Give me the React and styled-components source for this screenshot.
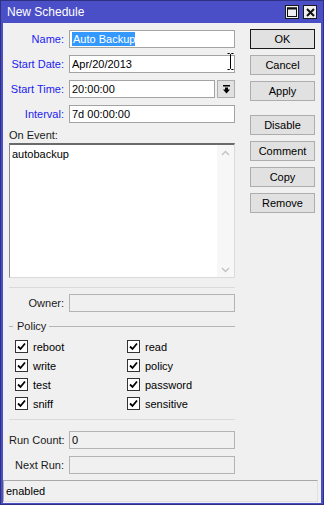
import React from 'react'
import styled, { createGlobalStyle } from 'styled-components'

const GlobalStyle = createGlobalStyle`
  html, body { margin: 0; padding: 0; background: #fff; }
  body { font-family: "Liberation Sans", Arial, sans-serif; font-size: 11px; }
  * { box-sizing: border-box; }
`;

const Window = styled.div`
  width: 324px;
  height: 505px;
  background: #4b4fc7;
  border: 1px solid #2e3082;
  padding: 0 2px 1px 2px;
  display: flex;
  flex-direction: column;
`;

const TitleBar = styled.div`
  height: 22px;
  display: flex;
  align-items: center;
  padding: 0 4px 0 4px;
  color: #fff;
  font-size: 12px;
`;

const Title = styled.span`
  flex: 1;
`;

const TitleButton = styled.div`
  width: 14px;
  height: 14px;
  margin-left: 4px;
  background: #f0f0f0;
  border: 1px solid #1a1a1a;
  display: flex;
  align-items: center;
  justify-content: center;
`;

const Body = styled.div`
  flex: 1;
  background: #f0f0f0;
  display: flex;
  flex-direction: column;
`;

const Main = styled.div`
  flex: 1;
  display: flex;
  padding: 6px 6px 0 6px;
`;

const FormCol = styled.div`
  width: 226px;
  padding-top: 1px;
  display: flex;
  flex-direction: column;
`;

const Row = styled.div`
  display: flex;
  align-items: center;
  height: 18px;
  margin-bottom: ${p => p.$mb ?? 7}px;
  position: relative;
`;

const Label = styled.label`
  width: 56px;
  text-align: right;
  padding-right: 1px;
  margin-right: 4px;
  color: ${p => (p.$blue ? '#1c1cf0' : '#1a1a1a')};
  white-space: nowrap;
`;

const Field = styled.div`
  flex: 1;
  height: 18px;
  border: 1px solid ${p => (p.$disabled ? '#b4b4b4' : '#a3a3a3')};
  background: ${p => (p.$disabled ? '#f0f0f0' : '#fff')};
  color: #000;
  display: flex;
  align-items: center;
  padding-left: 2px;
  white-space: nowrap;
  overflow: hidden;
`;

const Selected = styled.span`
  background: #3399ff;
  color: #fff;
  padding: 1px 0 1px 1px;
`;

const DropButton = styled.div`
  width: 18px;
  height: 18px;
  margin-left: 2px;
  background: #e1e1e1;
  border: 1px solid #adadad;
  display: flex;
  align-items: center;
  justify-content: center;
`;

const Cursor = styled.svg`
  position: absolute;
  right: 1px;
  top: -2px;
`;

const PlainLabel = styled.div`
  color: #1a1a1a;
  margin: 0 0 2px 0;
  line-height: 12px;
`;

const TextArea = styled.div`
  height: 135px;
  background: #fff;
  border-top: 2px solid #6a6a6a;
  border-left: 1px solid #8a8a8a;
  border-right: 1px solid #dadada;
  border-bottom: 1px solid #dadada;
  display: flex;
`;

const TextContent = styled.div`
  flex: 1;
  padding: 3px 2px;
  color: #000;
`;

const ScrollBar = styled.div`
  width: 17px;
  background: #f7f7f7;
  display: flex;
  flex-direction: column;
  justify-content: space-between;
  align-items: center;
  padding: 5px 0 4px 0;
`;

const Separator = styled.div`
  height: 1px;
  background: #d9d9d9;
  margin: ${p => p.$m};
`;

const GroupTitle = styled.div`
  display: flex;
  align-items: center;
  height: 14px;
  margin: 7px 0 4px 0;
  color: #1a1a1a;
  &::before {
    content: '';
    width: 4px;
    height: 1px;
    background: #b5b5b5;
    margin-right: 4px;
  }
  &::after {
    content: '';
    flex: 1;
    height: 1px;
    background: #b5b5b5;
    margin-left: 3px;
  }
`;

const CheckGrid = styled.div`
  display: grid;
  grid-template-columns: 112px 1fr;
  grid-auto-rows: 19px;
  padding-left: 6px;
`;

const CheckItem = styled.div`
  display: flex;
  align-items: center;
  color: #000;
`;

const Box = styled.div`
  width: 13px;
  height: 13px;
  background: #fff;
  border: 1px solid #333;
  margin-right: 5px;
  display: flex;
  align-items: center;
  justify-content: center;
`;

const ButtonCol = styled.div`
  width: 65px;
  margin-left: 15px;
  display: flex;
  flex-direction: column;
`;

const Button = styled.div`
  height: 20px;
  margin-bottom: ${p => p.$mb ?? 6}px;
  background: #e1e1e1;
  border: 1px solid ${p => (p.$default ? '#1a1a1a' : '#adadad')};
  color: #000;
  display: flex;
  align-items: center;
  justify-content: center;
`;

const StatusBar = styled.div`
  height: 22px;
  margin: 0 3px 1px 0;
  border: 1px solid #a8a8a8;
  border-right-color: #e0e0e0;
  border-bottom-color: #e0e0e0;
  display: flex;
  align-items: center;
  padding-left: 2px;
  color: #000;
`;

const Check = () => (
  <svg width="9" height="9" viewBox="0 0 9 9">
    <path d="M1 4.5 L3.5 7 L8 1.5" fill="none" stroke="#000" strokeWidth="1.8" />
  </svg>
);

const Chevron = ({ up }) => (
  <svg width="9" height="6" viewBox="0 0 9 6">
    <path d={up ? 'M1 5 L4.5 1.5 L8 5' : 'M1 1 L4.5 4.5 L8 1'} fill="none" stroke="#c2c2c2" strokeWidth="1.4" />
  </svg>
);

const policies = [
  ['reboot', 'read'],
  ['write', 'policy'],
  ['test', 'password'],
  ['sniff', 'sensitive'],
];

export default function App() {
  return (
    <>
      <GlobalStyle />
      <Window>
        <TitleBar>
          <Title>New Schedule</Title>
          <TitleButton>
            <svg width="10" height="10" viewBox="0 0 10 10">
              <rect x="0.5" y="1" width="9" height="8.5" fill="none" stroke="#111" strokeWidth="1" />
              <rect x="0" y="0.5" width="10" height="2" fill="#111" />
            </svg>
          </TitleButton>
          <TitleButton>
            <svg width="9" height="9" viewBox="0 0 9 9">
              <path d="M1 1 L8 8 M8 1 L1 8" stroke="#111" strokeWidth="2" />
            </svg>
          </TitleButton>
        </TitleBar>
        <Body>
          <Main>
            <FormCol>
              <Row>
                <Label $blue>Name:</Label>
                <Field><Selected>Auto Backup</Selected></Field>
              </Row>
              <Row>
                <Label $blue>Start Date:</Label>
                <Field>Apr/20/2013</Field>
                <Cursor width="7" height="17" viewBox="0 0 7 17">
                  <path d="M0.5 0.5 H2.5 L3.5 1.5 L4.5 0.5 H6.5 M3.5 1.5 V15.5 M0.5 16.5 H2.5 L3.5 15.5 L4.5 16.5 H6.5" fill="none" stroke="#000" strokeWidth="1" />
                </Cursor>
              </Row>
              <Row>
                <Label $blue>Start Time:</Label>
                <Field>20:00:00</Field>
                <DropButton>
                  <svg width="9" height="9" viewBox="0 0 9 9">
                    <rect x="1" y="0" width="7" height="1.5" fill="#000" />
                    <path d="M3 2.5 H6 V4.5 H8 L4.5 8.5 L1 4.5 H3 Z" fill="#000" />
                  </svg>
                </DropButton>
              </Row>
              <Row $mb={6}>
                <Label $blue>Interval:</Label>
                <Field>7d 00:00:00</Field>
              </Row>
              <PlainLabel>On Event:</PlainLabel>
              <TextArea>
                <TextContent>autobackup</TextContent>
                <ScrollBar>
                  <Chevron up />
                  <Chevron />
                </ScrollBar>
              </TextArea>
              <Separator $m="9px 0 6px 0" />
              <Row $mb={0}>
                <Label>Owner:</Label>
                <Field $disabled />
              </Row>
              <GroupTitle>Policy</GroupTitle>
              <CheckGrid>
                {policies.flat().map(name => (
                  <CheckItem key={name}>
                    <Box><Check /></Box>
                    {name}
                  </CheckItem>
                ))}
              </CheckGrid>
              <Separator $m="6px 0 11px 0" />
              <Row>
                <Label>Run Count:</Label>
                <Field $disabled>0</Field>
              </Row>
              <Row $mb={0}>
                <Label>Next Run:</Label>
                <Field $disabled />
              </Row>
            </FormCol>
            <ButtonCol>
              <Button $default>OK</Button>
              <Button>Cancel</Button>
              <Button $mb={14}>Apply</Button>
              <Button>Disable</Button>
              <Button>Comment</Button>
              <Button>Copy</Button>
              <Button>Remove</Button>
            </ButtonCol>
          </Main>
          <StatusBar>enabled</StatusBar>
        </Body>
      </Window>
    </>
  );
}
